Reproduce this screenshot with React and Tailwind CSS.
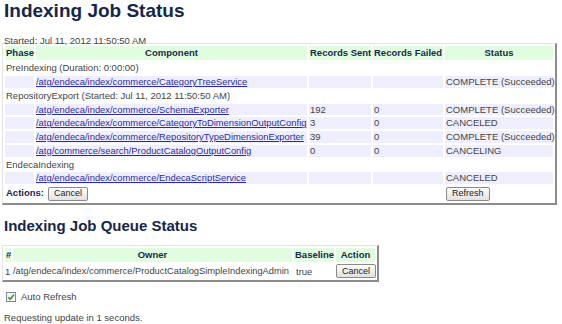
import React from 'react';

const jobRows = [
  { phase: 'PreIndexing (Duration: 0:00:00)' },
  { link: '/atg/endeca/index/commerce/CategoryTreeService', sent: '', failed: '', status: 'COMPLETE (Succeeded)' },
  { phase: 'RepositoryExport (Started: Jul 11, 2012 11:50:50 AM)' },
  { link: '/atg/endeca/index/commerce/SchemaExporter', sent: '192', failed: '0', status: 'COMPLETE (Succeeded)' },
  { link: '/atg/endeca/index/commerce/CategoryToDimensionOutputConfig', sent: '3', failed: '0', status: 'CANCELED' },
  { link: '/atg/endeca/index/commerce/RepositoryTypeDimensionExporter', sent: '39', failed: '0', status: 'COMPLETE (Succeeded)' },
  { link: '/atg/commerce/search/ProductCatalogOutputConfig', sent: '0', failed: '0', status: 'CANCELING' },
  { phase: 'EndecaIndexing' },
  { link: '/atg/endeca/index/commerce/EndecaScriptService', sent: '', failed: '', status: 'CANCELED' },
];

function OldButton({ children }) {
  return (
    <button className="h-[14px] px-[5px] leading-[11px] text-[9px] text-[#222] border border-[#8a8a8a] rounded-[2px] bg-gradient-to-b from-[#fdfdfd] to-[#e2e2e2]">
      {children}
    </button>
  );
}

function App() {
  const th = 'bg-[#e0fde0] text-[#1b2a4a] font-bold p-0 px-[1px] whitespace-nowrap';
  const td = 'p-0 px-[1px] h-[11.75px] leading-[11.75px] whitespace-nowrap';

  return (
    <div className="w-[562px] h-[324px] bg-white text-[#444] text-[9.5px] font-['Liberation_Sans',Arial,sans-serif] px-[4px] overflow-hidden">
      <h1 className="text-[19px] font-bold text-[#16264a] leading-[22px]">Indexing Job Status</h1>

      <div className="mt-[14px] leading-[9px] h-[9px]">Started: Jul 11, 2012 11:50:50 AM</div>

      <table className="table-fixed -mt-[2px] -ml-[2px] w-[555px] border-separate border-spacing-[2px] border border-t-[#e4e4e4] border-l-[#e4e4e4] border-r-2 border-b-2 border-r-[#8c8c8c] border-b-[#8c8c8c]">
        <thead>
          <tr>
            <th className={`${th} w-[29px] h-[14px] leading-[14px] text-left`}>Phase</th>
            <th className={`${th} w-[271px]`}>Component</th>
            <th className={`${th} w-[62px]`}>Records Sent</th>
            <th className={`${th} w-[70px]`}>Records Failed</th>
            <th className={`${th} w-[108px]`}>Status</th>
          </tr>
        </thead>
        <tbody>
          {jobRows.map((r, i) =>
            r.phase ? (
              <tr key={i}>
                <td colSpan={5} className={td}>{r.phase}</td>
              </tr>
            ) : (
              <tr key={i} className="bg-[#eeeefe]">
                <td className={td}></td>
                <td className="p-0 h-[11.75px] leading-[11.75px] whitespace-nowrap">
                  <a href="#" className="text-[#2b2ba6] underline text-[9.4px]">{r.link}</a>
                </td>
                <td className={td}>{r.sent}</td>
                <td className={td}>{r.failed}</td>
                <td className={td}>{r.status}</td>
              </tr>
            )
          )}
          <tr>
            <td colSpan={4} className="p-0 px-[1px] h-[14px] whitespace-nowrap">
              <span className="font-bold text-[#1b2a4a] mr-[4px]">Actions:</span>
              <OldButton>Cancel</OldButton>
            </td>
            <td className="p-0 px-[1px] h-[14px]">
              <OldButton>Refresh</OldButton>
            </td>
          </tr>
        </tbody>
      </table>

      <h2 className="mt-[11px] text-[15px] font-bold text-[#16264a] leading-[20px]">Indexing Job Queue Status</h2>

      <table className="table-fixed mt-[9px] -ml-[2px] w-[377px] border-separate border-spacing-[2px] border border-t-[#e4e4e4] border-l-[#e4e4e4] border-r-2 border-b-2 border-r-[#8c8c8c] border-b-[#8c8c8c]">
        <thead>
          <tr>
            <th className={`${th} w-[6px] h-[12px] leading-[12px] text-left`}>#</th>
            <th className={`${th} w-[279px]`}>Owner</th>
            <th className={`${th} w-[40px]`}>Baseline</th>
            <th className={`${th} w-[39px]`}>Action</th>
          </tr>
        </thead>
        <tbody>
          <tr>
            <td className="p-0 h-[13px] leading-[13px]">1</td>
            <td className="p-0 h-[13px] leading-[13px] whitespace-nowrap text-[9.3px]">
              /atg/endeca/index/commerce/ProductCatalogSimpleIndexingAdmin
            </td>
            <td className="p-0 pl-[2px] h-[13px] leading-[13px]">true</td>
            <td className="p-0 h-[13px] text-center">
              <OldButton>Cancel</OldButton>
            </td>
          </tr>
        </tbody>
      </table>

      <label className="mt-[10px] ml-[2px] h-[10px] flex items-center gap-[5px] leading-[10px]">
        <span className="w-[10px] h-[10px] border border-[#7a8a99] bg-[#f4f6f4] flex items-center justify-center">
          <svg width="8" height="8" viewBox="0 0 8 8">
            <path d="M1.2 4.2 L3.2 6.2 L6.8 1.8" fill="none" stroke="#2f9a2f" strokeWidth="1.6" />
          </svg>
        </span>
        Auto Refresh
      </label>

      <div className="mt-[10px] leading-[12px]">Requesting update in 1 seconds.</div>
    </div>
  );
}

export default App;
